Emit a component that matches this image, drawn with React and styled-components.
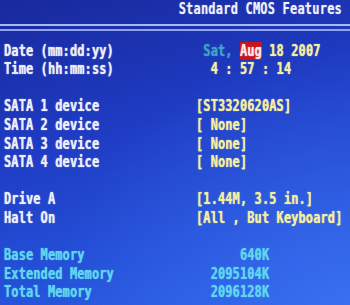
import React from 'react'
import styled, { createGlobalStyle } from 'styled-components'

const GlobalStyle = createGlobalStyle`
  html, body {
    margin: 0;
    padding: 0;
    background: #1e3cc0;
  }
  * { box-sizing: border-box; }
`

const Screen = styled.div`
  width: 350px;
  height: 305px;
  overflow: hidden;
  font-family: "DejaVu Sans Mono", "Liberation Mono", monospace;
  font-weight: bold;
  font-size: 12px;
  letter-spacing: 0.1px;
  background:
    radial-gradient(ellipse at 100% 100%, rgba(70,125,250,0.5) 0%, rgba(70,125,250,0) 60%),
    linear-gradient(165deg, #19299c 0%, #1e3bc2 38%, #2450d8 72%, #2c62e8 100%);
`

const Header = styled.div`
  display: flex;
  justify-content: flex-end;
  padding-right: 8px;
  height: 18.6px;
  line-height: 18.6px;
`

const Title = styled.span`
  display: inline-block;
  color: #eef0fa;
  letter-spacing: 0.2px;
  transform: scaleY(1.3);
  text-shadow: 0 0 1px rgba(255,255,255,0.5);
`

const Divider = styled.div`
  margin-top: 5.4px;
  height: 7px;
  border-top: 2px solid #aab8f0;
  border-bottom: 2px solid #8fa4ec;
`

const Body = styled.div`
  padding: 10.6px 0 0 4px;
`

const Row = styled.div`
  display: grid;
  grid-template-columns: 192px 1fr;
  height: 18.6px;
  line-height: 18.6px;
  white-space: pre;
`

const Gap = styled.div`
  height: 18.6px;
`

const Text = styled.span`
  display: inline-block;
  transform: scaleY(1.28);
  text-shadow: 0 0 1px currentColor;
  color: ${p => p.$tone === 'value' ? '#f2eea2' : p.$tone === 'mem' ? '#5ed6f0' : '#eceef8'};
`

const Day = styled.span`
  color: #3fa2c4;
`

const Month = styled.span`
  background: #c8141c;
  color: #fbe8e8;
`

const Item = ({ label, value, tone, valueTone = 'value' }) => (
  <Row>
    <Text $tone={tone}>{label}</Text>
    <Text $tone={valueTone}>{value}</Text>
  </Row>
)

export default function App() {
  return (
    <>
      <GlobalStyle />
      <Screen>
        <Header>
          <Title>Standard CMOS Features</Title>
        </Header>
        <Divider />
        <Body>
          <Row>
            <Text>Date (mm:dd:yy)</Text>
            <Text $tone="value"> <Day>Sat,</Day> <Month>Aug</Month> 18 2007</Text>
          </Row>
          <Item label="Time (hh:mm:ss)" value="  4 : 57 : 14" />
          <Gap />
          <Item label="SATA 1 device" value="[ST3320620AS]" />
          <Item label="SATA 2 device" value="[ None]" />
          <Item label="SATA 3 device" value="[ None]" />
          <Item label="SATA 4 device" value="[ None]" />
          <Gap />
          <Item label="Drive A" value="[1.44M, 3.5 in.]" />
          <Item label="Halt On" value="[All , But Keyboard]" />
          <Gap />
          <Item label="Base Memory" value="      640K" tone="mem" valueTone="mem" />
          <Item label="Extended Memory" value="  2095104K" tone="mem" valueTone="mem" />
          <Item label="Total Memory" value="  2096128K" tone="mem" valueTone="mem" />
        </Body>
      </Screen>
    </>
  )
}
